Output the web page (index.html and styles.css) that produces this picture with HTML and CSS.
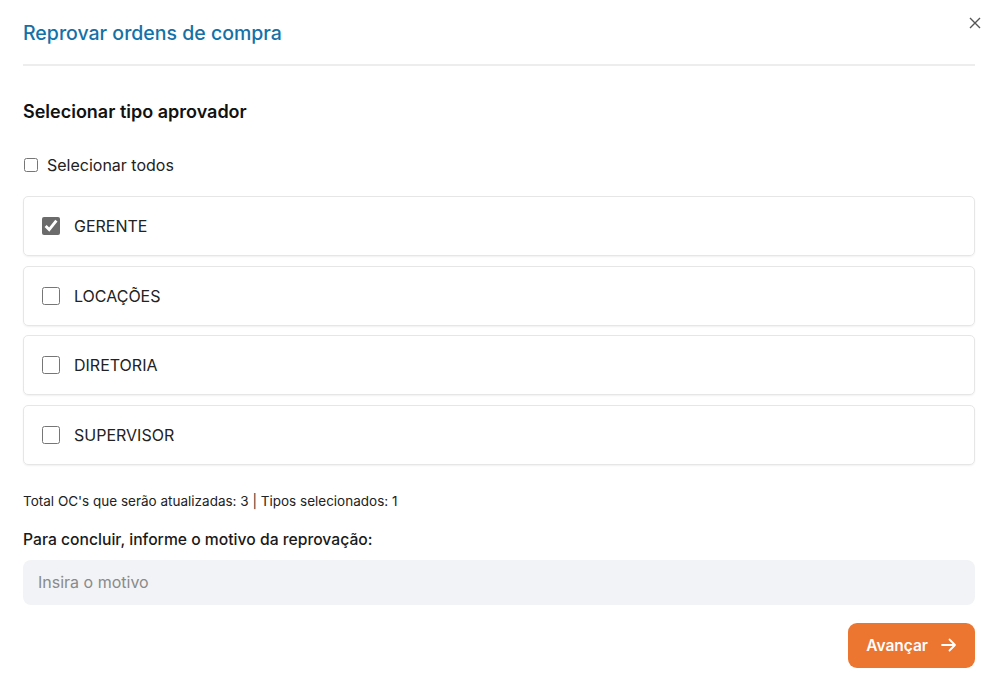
FILE: index.html
```html
<!DOCTYPE html>
<html lang="pt-BR">
<head>
  <meta charset="UTF-8">
  <title>Reprovar ordens de compra</title>
  <link rel="stylesheet" href="styles.css">
</head>
<body>
  <div class="modal">
    <header class="modal-header">
      <h1>Reprovar ordens de compra</h1>
      <button class="close-btn" aria-label="Fechar">
        <svg width="12" height="12" viewBox="0 0 12 12"><path d="M1 1L11 11M11 1L1 11" stroke="#555" stroke-width="1.4" fill="none"/></svg>
      </button>
    </header>

    <h2>Selecionar tipo aprovador</h2>

    <label class="select-all">
      <input type="checkbox">
      <span>Selecionar todos</span>
    </label>

    <div class="options">
      <label class="option"><input type="checkbox" checked><span>GERENTE</span></label>
      <label class="option"><input type="checkbox"><span>LOCAÇÕES</span></label>
      <label class="option"><input type="checkbox"><span>DIRETORIA</span></label>
      <label class="option"><input type="checkbox"><span>SUPERVISOR</span></label>
    </div>

    <p class="summary">Total OC's que serão atualizadas: 3 <span class="sep">|</span> Tipos selecionados: 1</p>

    <label class="reason-label" for="motivo">Para concluir, informe o motivo da reprovação:</label>
    <input id="motivo" class="reason-input" type="text" placeholder="Insira o motivo">

    <div class="actions">
      <button class="next-btn">
        Avançar
        <svg width="18" height="18" viewBox="0 0 18 18"><path d="M2 9H15M9.5 3.5L15 9L9.5 14.5" stroke="#fff" stroke-width="1.8" fill="none" stroke-linecap="round" stroke-linejoin="round"/></svg>
      </button>
    </div>
  </div>
</body>
</html>
```

FILE: styles.css
```css
* { box-sizing: border-box; margin: 0; padding: 0 }
html, body { height: 100% }
body {
  background: #fff;
  color: #1a1a1a;
  font-family: Inter, "Noto Sans", sans-serif;
}
.modal {
  padding: 0 25px 0 23px;
}
.modal-header {
  display: flex;
  justify-content: space-between;
  align-items: flex-start;
  height: 66px;
  border-bottom: 2px solid #ededed;
}
.modal-header h1 {
  margin-top: 21px;
  font-size: 19.5px;
  font-weight: 500;
  color: #1471a8;
}
.close-btn {
  margin-top: 17px;
  margin-right: -6px;
  background: none;
  border: none;
  width: 12px;
  height: 12px;
  cursor: pointer;
}
h2 {
  margin-top: 35px;
  font-size: 18px;
  font-weight: 600;
  color: #111;
}
.select-all {
  display: flex;
  align-items: center;
  gap: 9px;
  margin-top: 33px;
  font-size: 16px;
  color: #222;
}
.select-all input {
  width: 14px;
  height: 14px;
  margin-left: 1px;
  accent-color: #666;
}
.options {
  display: flex;
  flex-direction: column;
  gap: 9.5px;
  margin-top: 21px;
}
.option {
  display: flex;
  align-items: center;
  gap: 14px;
  height: 60px;
  padding-left: 18px;
  border: 1px solid #e6e6e6;
  border-radius: 5px;
  box-shadow: 0 1px 2px rgba(0,0,0,0.06);
  font-size: 16px;
  color: #222;
  cursor: pointer;
}
.option input {
  width: 18px;
  height: 18px;
  accent-color: #6b6b6b;
}
.summary {
  margin-top: 28px;
  font-size: 13.5px;
  color: #222;
}
.summary .sep { color: #333 }
.reason-label {
  display: block;
  margin-top: 21px;
  font-size: 15.7px;
  font-weight: 500;
  color: #1a1a1a;
}
.reason-input {
  display: block;
  width: 100%;
  height: 45px;
  margin-top: 11px;
  padding: 0 15px;
  border: none;
  border-radius: 8px;
  background: #f2f3f6;
  font-family: inherit;
  font-size: 16px;
  color: #222;
}
.reason-input::placeholder { color: #8a8a8a }
.actions {
  display: flex;
  justify-content: flex-end;
  margin-top: 18px;
}
.next-btn {
  display: flex;
  align-items: center;
  gap: 12px;
  height: 45px;
  padding: 0 17px 0 18px;
  border: none;
  border-radius: 9px;
  background: #ec752f;
  color: #fff;
  font-family: inherit;
  font-size: 15.5px;
  font-weight: 600;
  cursor: pointer;
}
```
